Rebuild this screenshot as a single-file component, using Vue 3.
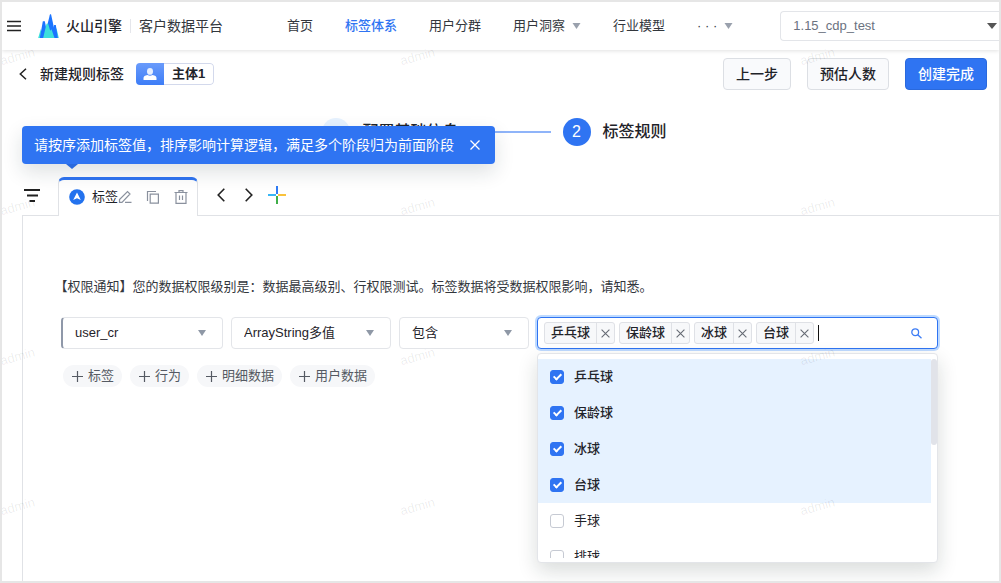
<script setup>
import { ref } from 'vue'

const navItems = [
  { label: '首页' },
  { label: '标签体系', active: true },
  { label: '用户分群' },
  { label: '用户洞察', caret: true },
  { label: '行业模型' },
  { label: '· · ·', caret: true },
]

const options = ref([
  { name: '乒乓球', checked: true },
  { name: '保龄球', checked: true },
  { name: '冰球', checked: true },
  { name: '台球', checked: true },
  { name: '手球', checked: false },
  { name: '排球', checked: false },
])

const filters = [
  { id: 'field', label: '字段', value: 'user_cr' },
  { id: 'type', label: '类型', value: 'ArrayString多值' },
  { id: 'operator', label: '运算符', value: '包含' },
]

const adders = ['标签', '行为', '明细数据', '用户数据']
const keyword = ref('')
const tipOpen = ref(true)
</script>

<template>
  <div class="page">
    <header class="header">
      <button class="icon-btn menu" aria-label="菜单">
        <svg width="14" height="12" viewBox="0 0 14 12"><path d="M0 1.5h14M0 6h14M0 10.5h14" stroke="#222" stroke-width="1.6" /></svg>
      </button>
      <svg class="logo" width="21" height="24" viewBox="0 0 62 72">
        <path d="M0 72 8 45 16 72zM47 72 55 42 62 72z" fill="#3ddfdc" />
        <path d="M5 72 14 22H20L30 72zM39 72 48 33H53L59 72z" fill="#1b74ff" />
        <path d="M18 72 35 2 37 0 39 2 54 72z" fill="#1b74ff" />
        <path d="M15 72 25 29H30L36 50 40 46 49 72z" fill="#3ddfdc" />
      </svg>
      <span class="brand">火山引擎</span>
      <span class="product">客户数据平台</span>
      <nav class="nav">
        <a v-for="item in navItems" :key="item.label" href="#" :class="{ active: item.active }">
          {{ item.label }}
          <svg v-if="item.caret" width="9" height="6" viewBox="0 0 9 6"><path d="M.5 0h8L4.500 6z" fill="#9aa1ad" /></svg>
        </a>
      </nav>
      <div class="select project">
        <select aria-label="项目"><option>1.15_cdp_test</option></select>
        <svg width="10" height="6" viewBox="0 0 10 6"><path d="M0 0h10L5 6z" fill="#555" /></svg>
      </div>
    </header>

    <main class="main">
      <div class="titlebar">
        <button class="icon-btn back" aria-label="返回">
          <svg width="8" height="12" viewBox="0 0 8 12"><path d="M7 .7 1.3 6 7 11.3" fill="none" stroke="#222" stroke-width="1.5" /></svg>
        </button>
        <h1>新建规则标签</h1>
        <span class="subject">
          <span class="subject-icon">
            <svg width="14" height="12" viewBox="0 0 14 12"><ellipse cx="7" cy="3.4" rx="3" ry="3.4" fill="#e6efff" /><path d="M.5 12V10q0-2.3 4-3 2.5 1.3 5 0 4 .7 4 3v2z" fill="#fff" /></svg>
          </span>
          <span class="subject-name">主体1</span>
        </span>
        <div class="actions">
          <button class="btn">上一步</button>
          <button class="btn">预估人数</button>
          <button class="btn primary">创建完成</button>
        </div>
      </div>

      <ol class="steps">
        <li>
          <span class="num done">
            <svg width="12" height="10" viewBox="0 0 12 10"><path d="M1 5l3.500 3.500L11 1.500" fill="none" stroke="#2f74f2" stroke-width="1.600" /></svg>
          </span>
          配置基础信息
        </li>
        <li class="line" aria-hidden="true"></li>
        <li><span class="num">2</span>标签规则</li>
      </ol>

      <div class="tabs">
        <button class="icon-btn filter" aria-label="排序">
          <svg width="16" height="13" viewBox="0 0 16 13"><path d="M0 1h16M3 6.5h11M5.500 12h5.500" stroke="#222" stroke-width="1.8" /></svg>
        </button>
        <div class="tab">
          <svg class="tab-logo" width="16" height="16" viewBox="0 0 16 16"><circle cx="8" cy="8" r="7.800" fill="#2372ee" /><path d="M8 3.500 11.800 11 8 9.200 4.200 11z" fill="#fff" /></svg>
          <span class="tab-name">标签</span>
          <button class="icon-btn" aria-label="编辑">
            <svg width="14" height="14" viewBox="0 0 14 14" fill="none" stroke="#8a919e" stroke-width="1.2"><path d="M1.500 12.400v-2.800L9.500 1.500l2.500 2.500-8 8.400zM7 12.400h6.500" /></svg>
          </button>
          <button class="icon-btn" aria-label="复制">
            <svg width="14" height="14" viewBox="0 0 14 14" fill="none" stroke="#8a919e" stroke-width="1.200"><path d="M1.500 11V1.500H10" /><path d="M4.200 4.200h8.200v9H4.200z" /></svg>
          </button>
          <button class="icon-btn" aria-label="删除">
            <svg width="14" height="14" viewBox="0 0 14 14" fill="none" stroke="#8a919e" stroke-width="1.200"><path d="M.5 2.500h13M5 2.500V.7h4v1.800M2 2.500v10.900h10V2.500M5.500 5.500v4.500M8.500 5.500v4.500" /></svg>
          </button>
        </div>
        <button class="icon-btn prev" aria-label="上一个">
          <svg width="8" height="14" viewBox="0 0 8 14"><path d="M7.300.8 1.200 7l6.100 6.200" fill="none" stroke="#222" stroke-width="1.600" /></svg>
        </button>
        <button class="icon-btn next" aria-label="下一个">
          <svg width="8" height="14" viewBox="0 0 8 14"><path d="M.7.8 6.800 7 .7 13.200" fill="none" stroke="#222" stroke-width="1.600" /></svg>
        </button>
        <button class="icon-btn add" aria-label="新增">
          <svg width="18" height="18" viewBox="0 0 18 18"><path d="M8 0h2v8H8z" fill="#2f7bf5" /><path d="M0 8h8v2H0z" fill="#38b6f5" /><path d="M10 8h8v2h-8z" fill="#f9c23c" /><path d="M8 10h2v8H8z" fill="#3fae49" /></svg>
        </button>

        <div v-if="tipOpen" class="tip" role="status">
          <span>请按序添加标签值，排序影响计算逻辑，满足多个阶段归为前面阶段</span>
          <button class="icon-btn" aria-label="关闭" @click="tipOpen = false">
            <svg width="10" height="10" viewBox="0 0 10 10"><path d="M.5.5l9 9M9.500.5l-9 9" stroke="#fff" stroke-width="1.300" /></svg>
          </button>
        </div>
      </div>

      <section class="panel">
        <p class="notice">【权限通知】您的数据权限级别是：数据最高级别、行权限测试。标签数据将受数据权限影响，请知悉。</p>

        <div class="rule">
          <div v-for="f in filters" :key="f.id" class="select" :class="f.id">
            <select :aria-label="f.label"><option>{{ f.value }}</option></select>
            <svg width="8" height="6" viewBox="0 0 8 6"><path d="M0 0h8L4 6z" fill="#8f98a6" /></svg>
          </div>

          <div class="multi">
            <div class="multi-box">
              <template v-for="o in options" :key="o.name">
                <span v-if="o.checked" class="tag">
                  <span class="tag-name">{{ o.name }}</span>
                  <button :aria-label="'移除' + o.name" @click="o.checked = false">
                    <svg width="9" height="9" viewBox="0 0 9 9"><path d="M.6.6l7.800 7.800M8.400.6.6 8.400" stroke="#666b75" stroke-width="1.100" /></svg>
                  </button>
                </span>
              </template>
              <span class="cursor"></span>
              <input v-model="keyword" type="text" aria-label="搜索值" />
              <svg class="search" width="11" height="11" viewBox="0 0 11 11" fill="none" stroke="#3d7df5" stroke-width="1.300"><circle cx="4.200" cy="4.200" r="3.400" /><path d="M6.700 6.700 10.500 10.200" /></svg>
            </div>
            <div class="dropdown">
              <div class="list">
                <label v-for="o in options" :key="o.name" class="option" :class="{ checked: o.checked }">
                  <input v-model="o.checked" type="checkbox" />
                  {{ o.name }}
                </label>
              </div>
              <div class="thumb"></div>
            </div>
          </div>
        </div>

        <div class="adders">
          <button v-for="a in adders" :key="a">
            <svg width="11" height="11" viewBox="0 0 11 11"><path d="M5.500 0v11M0 5.500h11" stroke="#555a63" stroke-width="1.200" /></svg>
            {{ a }}
          </button>
        </div>
      </section>
    </main>

    <div class="watermark" aria-hidden="true">
      <span v-for="n in 12" :key="n">admin</span>
    </div>
  </div>
</template>

<style>
body {
  margin: 0;
  background: #fff;
}
</style>

<style scoped>
.page {
  position: relative;
  display: flex;
  flex-direction: column;
  box-sizing: border-box;
  min-height: 100vh;
  overflow: hidden;
  border: 2px solid #e6e6e6;
  background: #fff;
  color: #1f2329;
  font: 13px/20px "Liberation Sans", "Noto Sans CJK SC", sans-serif;
}

button,
input,
select {
  box-sizing: border-box;
  margin: 0;
  padding: 0;
  border: 0;
  background: none;
  color: inherit;
  font: inherit;
}

svg {
  display: block;
  flex: none;
}

.icon-btn {
  display: flex;
  flex: none;
}

/* Header */
.header {
  display: flex;
  align-items: center;
  height: 48px;
  padding-left: 5px;
  box-shadow: 0 1px 4px rgba(0, 0, 0, 0.12);
  white-space: nowrap;
}

.logo {
  margin-left: 17px;
}

.brand {
  margin-left: 7px;
  font-size: 14px;
  font-weight: 500;
}

.product {
  margin-left: 8px;
  padding-left: 8px;
  border-left: 1px solid #e5e6eb;
  font-size: 14px;
  line-height: 14px;
  color: #33373d;
}

.nav {
  display: flex;
  gap: 32px;
  margin-left: 64px;
}

.nav a {
  display: flex;
  align-items: center;
  gap: 7px;
  color: #33373d;
  text-decoration: none;
}

.nav a.active {
  color: #2f74f2;
  font-weight: 500;
}

.select {
  display: grid;
  align-items: center;
  box-sizing: border-box;
  height: 32px;
  border: 1px solid #e3e5e9;
  border-radius: 4px;
  background: #fff;
}

.select select,
.select svg {
  grid-area: 1 / 1;
}

.select select {
  width: 100%;
  height: 30px;
  padding: 0 24px 0 12px;
  appearance: none;
  outline: 0;
}

.select svg {
  justify-self: end;
  margin-right: 16px;
  pointer-events: none;
}

.project {
  flex: 1;
  min-width: 160px;
  height: 30px;
  margin-left: 47px;
  border-right: 0;
  border-radius: 4px 0 0 4px;
  color: #6b7280;
}

.project select {
  height: 28px;
}

.project svg {
  margin-right: 2px;
}

/* Title bar */
.main {
  display: flex;
  flex: 1;
  flex-direction: column;
}

.titlebar {
  display: flex;
  align-items: center;
  padding: 8px 12px 0 17px;
}

h1 {
  margin: 0 12px 0 13px;
  font-size: 14px;
  font-weight: 500;
}

.subject {
  display: flex;
  box-sizing: border-box;
  height: 22px;
  overflow: hidden;
  border-radius: 4px;
}

.subject-icon {
  display: flex;
  align-items: center;
  justify-content: center;
  width: 28px;
  background: linear-gradient(#6a9bfb, #3d7df7);
}

.subject-name {
  padding: 0 8px;
  border: 1px solid #d3d9ec;
  border-left: 0;
  border-radius: 0 4px 4px 0;
  font-weight: 600;
}

.actions {
  display: flex;
  gap: 16px;
  margin-left: auto;
}

.btn {
  height: 32px;
  padding: 0 12px;
  border: 1px solid #dcdfe4;
  border-radius: 4px;
  background: #f9fafc;
  font-size: 14px;
  font-weight: 500;
}

.btn.primary {
  border-color: #2a69dd;
  background: #2f74f2;
  color: #fff;
}

/* Steps */
.steps {
  display: flex;
  align-items: center;
  justify-content: center;
  gap: 12px;
  margin: 28px 0 0;
  padding: 0 12px 0 0;
  list-style: none;
  font-size: 16px;
  font-weight: 500;
}

.steps li {
  display: flex;
  align-items: center;
  gap: 12px;
}

.steps .line {
  width: 80px;
  height: 2px;
  background: #8fb4f9;
}

.num {
  display: flex;
  align-items: center;
  justify-content: center;
  width: 28px;
  height: 28px;
  border-radius: 50%;
  background: #2f74f2;
  color: #fff;
}

.num.done {
  background: #e6f2ff;
}

/* Tabs */
.tabs {
  position: relative;
  display: flex;
  align-items: center;
  box-sizing: border-box;
  height: 38px;
  margin-top: 31px;
  padding: 0 0 2px 22px;
}

.tab {
  position: relative;
  z-index: 1;
  display: flex;
  align-items: center;
  align-self: flex-start;
  box-sizing: border-box;
  width: 140px;
  height: 39px;
  margin-left: 18px;
  padding: 0 9px 2px 10px;
  border: 1px solid #e0e2e6;
  border-top: 3px solid #2f74f2;
  border-bottom: 0;
  border-radius: 6px 6px 0 0;
  background: #fff;
}

.tab-name {
  flex: 1;
  margin-left: 7px;
  white-space: nowrap;
}

.tab .icon-btn + .icon-btn {
  margin-left: 14px;
}

.prev {
  margin-left: 19px;
}

.next {
  margin-left: 20px;
}

.add {
  margin-left: 15px;
}

.tip {
  position: absolute;
  z-index: 3;
  top: -51px;
  left: 20px;
  display: flex;
  align-items: center;
  gap: 16px;
  box-sizing: border-box;
  height: 38px;
  padding: 0 15px 0 12px;
  border-radius: 4px;
  background: #2f74f2;
  box-shadow: 0 8px 20px rgba(20, 40, 50, 0.14);
  color: #fff;
  font-size: 14px;
  white-space: nowrap;
}

.tip::after {
  content: "";
  position: absolute;
  top: 100%;
  left: 44px;
  border: 6px solid transparent;
  border-top: 5px solid #2a69dd;
  border-bottom: 0;
}

/* Panel */
.panel {
  flex: 1;
  margin-left: 20px;
  padding: 61px 61px 0 38px;
  border-top: 1px solid #e0e2e6;
  border-left: 1px solid #e0e2e6;
}

.notice {
  margin: 0;
  color: #33373d;
  text-spacing-trim: trim-start;
}

.rule {
  display: grid;
  grid-template-columns: 162fr 160fr 130fr 401fr;
  gap: 8px;
  margin-top: 20px;
}

.rule .field {
  border-left: 2px solid #8f98a9;
}

.multi {
  position: relative;
  min-width: 0;
}

.multi-box {
  display: flex;
  align-items: center;
  gap: 4px;
  box-sizing: border-box;
  height: 32px;
  padding: 0 15px 0 6px;
  border: 1px solid #2f74f2;
  border-radius: 4px;
  background: #fff;
  box-shadow: 0 0 0 2px #bedaff;
}

.tag {
  display: flex;
  flex: none;
  box-sizing: border-box;
  height: 22px;
  border: 1px solid #dfe1e6;
  border-radius: 3px;
  background: #f7f8fa;
  font-weight: 500;
}

.tag-name {
  padding: 0 6px;
}

.tag button {
  display: flex;
  align-items: center;
  justify-content: center;
  width: 18px;
  border-left: 1px solid #dfe1e6;
}

.cursor {
  width: 1px;
  height: 16px;
  background: #111;
}

.multi-box input {
  flex: 1;
  min-width: 0;
  outline: 0;
}

.dropdown {
  position: absolute;
  z-index: 2;
  top: 36px;
  right: 0;
  left: 0;
  display: flex;
  box-sizing: border-box;
  padding: 5px 0 4px;
  border: 1px solid #e3e5e9;
  border-radius: 4px;
  background: #fff;
  box-shadow: 0 8px 20px rgba(20, 40, 30, 0.16);
}

.list {
  flex: 1;
  height: 199px;
  overflow: hidden;
}

.option {
  display: flex;
  align-items: center;
  gap: 10px;
  height: 36px;
  padding-left: 12px;
}

.option.checked {
  background: #e6f2ff;
  font-weight: 500;
}

.option input {
  display: grid;
  place-items: center;
  width: 14px;
  height: 14px;
  border: 1px solid #c6cad3;
  border-radius: 3px;
  background: #fff;
  appearance: none;
}

.option input:checked {
  border-color: #2f74f2;
  background: #2f74f2;
}

.option input:checked::after {
  content: "";
  width: 3px;
  height: 6px;
  margin-bottom: 2px;
  border: solid #fff;
  border-width: 0 2px 2px 0;
  transform: rotate(45deg);
}

.thumb {
  width: 6px;
  height: 86px;
  border-radius: 3px;
  background: #e1e3e9;
}

.adders {
  display: flex;
  gap: 8px;
  margin: 16px 0 0 2px;
}

.adders button {
  display: flex;
  align-items: center;
  gap: 5px;
  height: 22px;
  padding: 0 8px 0 9px;
  border-radius: 11px;
  background: #f6f7f9;
  color: #555a63;
}

/* Watermark */
.watermark {
  position: absolute;
  z-index: 5;
  top: 47px;
  left: -2px;
  display: grid;
  grid-template-columns: repeat(3, 400px);
  grid-auto-rows: 150px;
  pointer-events: none;
  color: rgba(0, 0, 0, 0.08);
}

.watermark span {
  width: 34px;
  height: 16px;
  line-height: 16px;
  transform: rotate(-15deg);
}
</style>
